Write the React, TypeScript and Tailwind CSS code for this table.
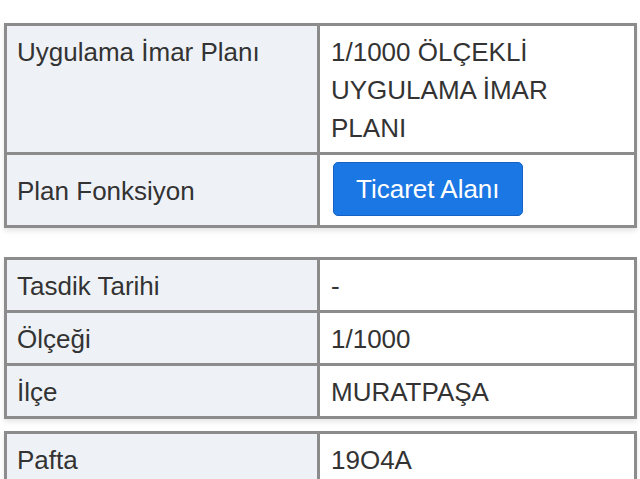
import React from 'react';

type Row = { label: string; value: React.ReactNode; center?: boolean; cellClass?: string };

const InfoTable = ({ rows, className = '' }: { rows: Row[]; className?: string }) => (
  <div className={`border-[3px] border-[#8c8c8c] bg-white shadow-[0_3px_5px_rgba(0,0,0,0.10)] ${className}`}>
    {rows.map((row, i) => (
      <div
        key={row.label}
        className={`grid grid-cols-[313px_1fr] ${i > 0 ? 'border-t-[3px] border-[#8c8c8c]' : ''}`}
      >
        <div
          className={`flex bg-[#eef2f6] border-r-[3px] border-[#8c8c8c] pl-[10px] pt-[7px] pb-[5px] ${row.center ? 'items-center' : 'items-start'}`}
        >
          {row.label}
        </div>
        <div className={row.cellClass ?? 'pl-[11px] pr-[10px] pt-[7px] pb-[5px]'}>{row.value}</div>
      </div>
    ))}
  </div>
);

export default function App() {
  return (
    <div
      className="w-[640px] h-[479px] overflow-hidden bg-white pl-[4px] pr-[3px] pt-[23px] text-[26px] leading-[38px] text-[#333333]"
      style={{ fontFamily: '"Liberation Sans", Arial, sans-serif' }}
    >
      <InfoTable
        rows={[
          {
            label: 'Uygulama İmar Planı',
            value: (
              <>
                1/1000 ÖLÇEKLİ
                <br />
                UYGULAMA İMAR
                <br />
                PLANI
              </>
            ),
          },
          {
            label: 'Plan Fonksiyon',
            center: true,
            cellClass: 'pl-[13px] pt-[7px] pb-[9px]',
            value: (
              <button className="h-[54px] px-[22px] rounded-[5px] bg-[#1b77e3] border border-[#1562c4] text-white text-[26px] leading-none">
                Ticaret Alanı
              </button>
            ),
          },
        ]}
      />

      <InfoTable
        className="mt-[29px]"
        rows={[
          { label: 'Tasdik Tarihi', value: '-' },
          { label: 'Ölçeği', value: '1/1000' },
          { label: 'İlçe', value: 'MURATPAŞA' },
        ]}
      />

      <InfoTable className="mt-[12px]" rows={[{ label: 'Pafta', value: '19O4A' }]} />
    </div>
  );
}
